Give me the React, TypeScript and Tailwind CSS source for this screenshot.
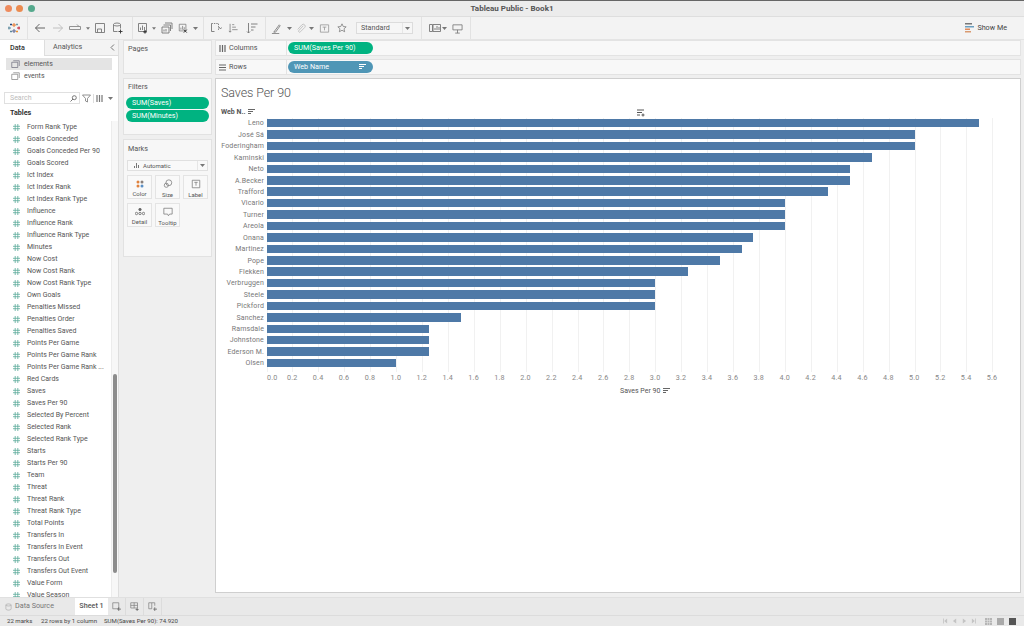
import React from "react";

const fields = ["Form Rank Type","Goals Conceded","Goals Conceded Per 90","Goals Scored","Ict Index","Ict Index Rank","Ict Index Rank Type","Influence","Influence Rank","Influence Rank Type","Minutes","Now Cost","Now Cost Rank","Now Cost Rank Type","Own Goals","Penalties Missed","Penalties Order","Penalties Saved","Points Per Game","Points Per Game Rank","Points Per Game Rank ...","Red Cards","Saves","Saves Per 90","Selected By Percent","Selected Rank","Selected Rank Type","Starts","Starts Per 90","Team","Threat","Threat Rank","Threat Rank Type","Total Points","Transfers In","Transfers In Event","Transfers Out","Transfers Out Event","Value Form","Value Season"];
const bars: [string, number][] = [["Leno",5.5],["José Sá",5],["Foderingham",5],["Kaminski",4.67],["Neto",4.5],["A.Becker",4.5],["Trafford",4.33],["Vicario",4],["Turner",4],["Areola",4],["Onana",3.75],["Martinez",3.67],["Pope",3.5],["Flekken",3.25],["Verbruggen",3],["Steele",3],["Pickford",3],["Sanchez",1.5],["Ramsdale",1.25],["Johnstone",1.25],["Ederson M.",1.25],["Olsen",1]];
const ticks = Array.from({ length: 29 }, (_, i) => i * 0.2);
const UNIT = 129.6;

const S = ({ children, w = 12, h = 12, c = "#777" }: { children: React.ReactNode; w?: number; h?: number; c?: string }) => (
  <svg width={w} height={h} viewBox="0 0 12 12" fill="none" stroke={c} strokeWidth="0.9">{children}</svg>
);
const Caret = () => <svg width="5" height="3" viewBox="0 0 5 3"><path d="M0 0h5L2.500 3z" fill="#777" /></svg>;
const Hash = () => (
  <svg width="7" height="7" viewBox="0 0 7 7" stroke="#5aa999" strokeWidth="0.8"><path d="M2.200 0v7M4.800 0v7M0 2.300h7M0 4.700h7" /></svg>
);
const SortBars = ({ c = "#666" }: { c?: string }) => (
  <svg width="7" height="6" viewBox="0 0 7 6" stroke={c} strokeWidth="1"><path d="M0 .5h7M0 2.500h5M0 4.500h3" /></svg>
);
const Logo = () => (
  <svg width="12" height="12" viewBox="0 0 12 12" strokeWidth="1">
    <path d="M6 1v4M4 3h4" stroke="#e8762d" /><path d="M6 7v4M4 9h4" stroke="#5b6591" />
    <path d="M1 4.500v3M0 6h3" stroke="#59879b" /><path d="M11 4.500v3M9 6h3" stroke="#c72037" />
    <path d="M3 1.500v2M2 2.500h2" stroke="#1f447e" /><path d="M9 8.500v2M8 9.500h2" stroke="#eb912b" />
    <path d="M9 1.500v2M8 2.500h2" stroke="#7099a6" /><path d="M3 8.500v2M2 9.500h2" stroke="#5b879b" />
  </svg>
);
const Sheet = ({ mark }: { mark?: string }) => (
  <S><path d="M1.500 1.500h8v8h-8z" /><path d="M3.500 8V5.500M5.500 8V3.500M7.500 8V5" />{mark && <path d={mark} stroke="#333" strokeWidth="1.200" />}</S>
);
const Sep = () => <div className="w-px h-[22px] bg-[#e2e2e2] shrink-0" />;
const I = ({ w, children }: { w: number; children?: React.ReactNode }) => (
  <div className="flex items-center justify-center shrink-0" style={{ width: w }}>{children}</div>
);
const Card = ({ title, className, titleClass = "pt-[3px]", children }: { title: string; className: string; titleClass?: string; children?: React.ReactNode }) => (
  <div className={"bg-[#f7f7f7] border border-[#e2e2e2] " + className}>
    <div className={"text-[7.2px] leading-[9px] text-[#555] pl-[4px] " + titleClass}>{title}</div>
    {children}
  </div>
);
const Shelf = ({ icon, label, pill, color, sort, mb }: { icon: React.ReactNode; label: string; pill: string; color: string; sort?: boolean; mb: string }) => (
  <div className={"flex h-[16px] items-center bg-[#f8f8f8] border border-[#e3e3e3] " + mb}>
    <div className="w-[71px] h-full flex items-center gap-[3px] pl-[3px] text-[7.2px] text-[#555] border-r border-[#e3e3e3]">{icon}{label}</div>
    <div className={"ml-[1px] w-[85px] h-[12px] rounded-full flex items-center justify-between pl-[6px] pr-[7px] text-[7.2px] text-white " + color}>
      {pill}{sort && <SortBars c="#fff" />}
    </div>
  </div>
);
const Mark = ({ label, icon }: { label: string; icon: React.ReactNode }) => (
  <div className="w-[25px] h-[24px] pt-[2px] bg-[#f9f9f9] border border-[#e4e4e4] flex flex-col items-center justify-center gap-[2px] text-[6px] leading-[7px] text-[#555]">
    {icon}{label}
  </div>
);

export default function App() {
  return (
    <div className="w-[1024px] h-[626px] overflow-hidden flex flex-col bg-[#efefef] text-[#555]" style={{ fontFamily: '"Roboto", "Liberation Sans", sans-serif' }}>
      {/* Title bar */}
      <div className="h-[17px] shrink-0 relative flex items-center justify-center bg-[#ececec] border-t border-t-[#666] border-b border-b-[#dedede] text-[8px] font-bold text-[#555]">
        <div className="absolute left-[4.5px] top-[3.5px] flex gap-[4.5px]">
          <span className="w-[7px] h-[7px] rounded-full bg-[#ee8b5e]" />
          <span className="w-[7px] h-[7px] rounded-full bg-[#eb8b50]" />
          <span className="w-[7px] h-[7px] rounded-full bg-[#55a98d]" />
        </div>
        Tableau Public - Book1
      </div>

      {/* Toolbar */}
      <div className="h-[23px] shrink-0 flex items-center bg-[#f3f3f3] border-b border-[#e4e4e4]">
        <I w={27}><Logo /></I><Sep />
        <I w={24}><S w={12} h={12} c="#555"><path d="M11 6H1.500M5.500 2 1.500 6l4 4" /></S></I>
        <I w={12}><S c="#bbb"><path d="M1 6h9.500M6.500 2l4 4-4 4" /></S></I>
        <I w={22}><S c="#888"><path d="M.5 4.500h11v3H.5z" /><path d="M8 2.500l2 2" /></S></I>
        <I w={4}><Caret /></I>
        <I w={20}><S><path d="M1.500 1.500h9v9h-9z" /><path d="M3.500 10.500V7h4v3.500" /></S></I>
        <I w={16}><S><ellipse cx="5" cy="2.500" rx="3.500" ry="1.500" /><path d="M1.500 2.500v7h4M8.500 2.500v4" /><path d="M8.500 7.500v4M6.500 9.500h4" stroke="#333" /></S></I>
        <I w={6} /><Sep />
        <I w={19}><Sheet mark="M8 8v3.500M6.300 9.800h3.400" /></I>
        <I w={4}><Caret /></I>
        <I w={22}><S><path d="M4 1h7v6M2.500 3h7v6M1 5h7v6H1z" /><path d="M3 9.500v-2M5 9.500V7" /></S></I>
        <I w={10}><Sheet mark="M7 8l3.500 3.500M10.500 8 7 11.500" /></I>
        <I w={14}><Caret /></I>
        <I w={1} /><Sep />
        <I w={24}><S><path d="M1.500 1.500h7v7" strokeDasharray="1.400 1" /><path d="M1.500 1.500v8h3M9 5l1.500 2 1-1.500" /></S></I>
        <I w={10}><S><path d="M2.500 1v10M1 9.500 2.500 11 4 9.500M5 2h2.500M5 5h4.500M5 8h6.500" /></S></I>
        <I w={27}><S><path d="M2.500 1v10M1 9.500 2.500 11 4 9.500M5 2h6.500M5 5h4.500M5 8h2.500" /></S></I>
        <Sep />
        <I w={20}><S w={11} h={11}><path d="M3 10 9 2l1 1-5 7zM1 11.500h8" /></S></I>
        <I w={6}><Caret /></I>
        <I w={16}><S w={11} h={11} c="#bbb"><path d="M9 3 4 8.500a1 1 0 0 0 2 1L10.500 5a2 2 0 0 0-3-3L3 7" /></S></I>
        <I w={6}><Caret /></I>
        <I w={20}><S w={11} h={11} c="#999"><path d="M1.500 2h9v8h-9z" /><path d="M4 4.500h4M6 4.500v3.500" /></S></I>
        <I w={16}><S w={10} h={10}><path d="M6 1l1.500 3.200 3.500.4-2.600 2.300.8 3.600L6 8.700l-3.200 1.800.8-3.600L1 4.600l3.500-.4z" /></S></I>
        <I w={6} />
        <div className="w-[57px] h-[12px] shrink-0 bg-[#f6f6f6] border border-[#dcdcdc] flex items-center text-[7.2px] text-[#555]">
          <span className="flex-1 pl-[4px]">Standard</span>
          <span className="w-[10px] h-full flex items-center justify-center border-l border-[#e6e6e6]"><Caret /></span>
        </div>
        <I w={8} /><Sep />
        <I w={6} />
        <I w={13}><S w={12} c="#777"><path d="M.5 2.500h3v7h-3zM4 2.500h7.500v7H4z" /><path d="M6 8V6M8 8V4M10 8V5" /></S></I>
        <I w={6}><Caret /></I>
        <I w={20}><S w={11} h={11}><path d="M1 2h10v5.500H1zM6 7.500V11M3.500 11h5" /></S></I>
        <I w={3} /><Sep />
        <div className="flex-1" />
        <div className="flex items-center gap-[3px] text-[7.2px] text-[#444] pr-[17px]">
          <svg width="9" height="10" viewBox="0 0 9 10"><path d="M0 0h7v1.500H0z" fill="#777" /><path d="M0 3h9v1.500H0z" fill="#6a9fc0" /><path d="M0 5.500h5V7H0z" fill="#e08a5a" /><path d="M0 8h6v1.500H0z" fill="#d99a70" /></svg>
          Show Me
        </div>
      </div>

      {/* Main */}
      <div className="flex-1 min-h-0 flex">
        {/* Data pane */}
        <div className="w-[119px] shrink-0 bg-white border-r border-[#dedede] flex flex-col overflow-hidden text-[7px]">
          <div className="h-[16px] shrink-0 flex items-stretch text-[7.2px]">
            <div className="w-[44px] flex items-center pl-[10px] font-medium text-[#333]">Data</div>
            <div className="flex-1 flex items-center justify-between pl-[8px] pr-[3px] bg-[#f3f3f3] border-l border-b border-[#dedede] text-[#555]">
              Analytics
              <svg width="5" height="7" viewBox="0 0 5 7" fill="none" stroke="#777"><path d="M4 .5 1 3.500l3 3" /></svg>
            </div>
          </div>
          <div className="pt-[2px] px-[6px] text-[#555]">
            <div className="h-[12px] flex items-center gap-[4px] pl-[5px] bg-[#e4e4e4]"><S w={9} h={9} c="#667"><path d="M1 3h8v7H1z" /><path d="M3 1h8v7" /></S>elements</div>
            <div className="h-[12px] flex items-center gap-[4px] pl-[5px]"><S w={9} h={9}><path d="M1 3h8v7H1z" /><path d="M3 1h8v7" /></S>events</div>
          </div>
          <div className="h-[12px] mt-[10px] flex items-center shrink-0 pl-[4px]">
            <div className="w-[76px] h-[12px] border border-[#e0e0e0] flex items-center justify-between pl-[5px] pr-[2px] text-[#bbb]">
              Search
              <svg width="7" height="7" viewBox="0 0 7 7" fill="none" stroke="#777"><circle cx="4.300" cy="2.700" r="2" /><path d="M3 4 .5 6.500" /></svg>
            </div>
            <div className="ml-[2px]"><svg width="9" height="9" viewBox="0 0 9 9" fill="none" stroke="#777" strokeWidth=".8"><path d="M.5 1h8L5.500 4.500V8l-2-1V4.500z" /></svg></div>
            <div className="w-px h-[9px] bg-[#ddd] mx-[2px]" />
            <svg width="7" height="7" viewBox="0 0 7 7" stroke="#777"><path d="M1 0v7M3.500 0v7M6 0v7" strokeWidth="1.200" /></svg>
            <div className="ml-[5px]"><Caret /></div>
          </div>
          <div className="mt-[4px] pl-[10px] h-[10px] leading-[10px] text-[7.2px] font-bold text-[#333] shrink-0">Tables</div>
          <div className="relative flex-1 min-h-0 mt-[3px] overflow-hidden">
            <div className="absolute top-0 bottom-0 right-0 w-[7px] bg-[#f7f7f7] border-l border-[#ececec]">
              <div className="absolute left-[1px] w-[4px] top-[253px] h-[199px] rounded-full bg-[#8c8c8c]" />
            </div>
            {fields.map((f) => (
              <div key={f} className="h-[12px] flex items-center gap-[7px] pl-[13px] whitespace-nowrap text-[#555]"><Hash />{f}</div>
            ))}
          </div>
        </div>

        {/* Cards column */}
        <div className="w-[96px] shrink-0 pl-[4px] pr-[3px] flex flex-col gap-[4px]">
          <Card title="Pages" className="h-[34px]" />
          <Card title="Filters" className="h-[57px]">
            <div className="mt-[6px] px-[2px] flex flex-col gap-[1px]">
              <div className="h-[12px] rounded-full bg-[#00b381] text-white text-[7.2px] flex items-center pl-[6px]">SUM(Saves)</div>
              <div className="h-[12px] rounded-full bg-[#00b381] text-white text-[7.2px] flex items-center pl-[6px]">SUM(Minutes)</div>
            </div>
          </Card>
          <Card title="Marks" className="h-[118px]" titleClass="pt-[4px]">
            <div className="mt-[7px] mx-[3px] h-[11px] border border-[#e0e0e0] bg-[#f9f9f9] flex items-center text-[6px] text-[#555]">
              <span className="flex-1 flex items-center gap-[4px] pl-[6px]">
                <svg width="5" height="5" viewBox="0 0 5 5" stroke="#777"><path d="M.5 5V3M2.500 5V0M4.500 5V2" /></svg>Automatic
              </span>
              <span className="w-[10px] h-full flex items-center justify-center border-l border-[#e6e6e6]"><Caret /></span>
            </div>
            <div className="mt-[4px] mx-[3px] grid grid-cols-3 gap-x-[3px] gap-y-[4px] w-[81px]">
              <Mark label="Color" icon={<svg width="8" height="8" viewBox="0 0 8 8"><circle cx="2" cy="2" r="1.500" fill="#e0823d" /><circle cx="6" cy="2" r="1.500" fill="#8a7f7a" /><circle cx="2" cy="6" r="1.500" fill="#e0823d" /><circle cx="6" cy="6" r="1.500" fill="#5b8fc4" /></svg>} />
              <Mark label="Size" icon={<S w={10} h={10}><circle cx="7" cy="4.500" r="3.500" /><circle cx="4" cy="7.500" r="2.500" /></S>} />
              <Mark label="Label" icon={<S w={10} h={10}><path d="M1.500 1.500h9v9h-9z" /><path d="M4 4h4M6 4v4" /></S>} />
              <Mark label="Detail" icon={<svg width="10" height="8" viewBox="0 0 10 8" fill="none" stroke="#666" strokeWidth=".8"><circle cx="5" cy="1.500" r="1.200" fill="#666" /><circle cx="1.500" cy="5.500" r="1.200" /><circle cx="5" cy="5.500" r="1.200" /><circle cx="8.500" cy="5.500" r="1.200" /></svg>} />
              <Mark label="Tooltip" icon={<S w={10} h={10}><path d="M1 1.500h10v7H8l-1.500 2-1-2H1z" /></S>} />
            </div>
          </Card>
        </div>

        {/* Right area */}
        <div className="flex-1 min-w-0 pr-[3px] pb-[4px] flex flex-col">
          <Shelf mb="mb-[3px]" label="Columns" pill="SUM(Saves Per 90)" color="bg-[#00b381]" icon={<svg width="7" height="7" viewBox="0 0 7 7" stroke="#666" strokeWidth="1.200"><path d="M1 0v7M3.500 0v7M6 0v7" /></svg>} />
          <Shelf mb="mb-[3px]" label="Rows" pill="Web Name" color="bg-[#4f96b6]" sort icon={<svg width="7" height="7" viewBox="0 0 7 7" stroke="#666" strokeWidth="1.200"><path d="M0 1h7M0 3.500h7M0 6h7" /></svg>} />
          <div className="flex-1 min-h-0 bg-white border border-[#cfcfcf] flex flex-col">
            <div className="h-[28px] pl-[5px] flex items-center text-[12.5px] tracking-[-0.1px] text-[#555] font-light shrink-0">Saves Per 90</div>
            <div className="h-[10.5px] flex items-center shrink-0 relative">
              <div className="pl-[5px] flex items-center gap-[3px] text-[7px] font-bold text-[#555]">Web N..<SortBars /></div>
              <div className="absolute left-[421px] top-[2px] flex flex-col"><svg width="9" height="8" viewBox="0 0 9 8" stroke="#555"><path d="M0 1h7M0 3.500h5M0 6h3M6 4.500v3M4.500 6h3" /></svg></div>
            </div>
            <div className="relative shrink-0 h-[259.5px]">
              {ticks.map((t) => (
                <div key={t} className="absolute top-0 h-[254px] w-px bg-[#f1f1f1]" style={{ left: 50.5 + t * UNIT }} />
              ))}
              <div className="relative flex flex-col">
                {bars.map(([n, v]) => (
                  <div key={n} className="h-[11.43px] flex items-center">
                    <div className="w-[48px] pt-[1px] text-right text-[7px] tracking-[0.15px] text-[#777] whitespace-nowrap">{n}</div>
                    <div className="ml-[2.5px] h-[8.5px] bg-[#4e79a7]" style={{ width: v * UNIT }} />
                  </div>
                ))}
              </div>
              {ticks.map((t, i) => (
                <span key={t} className="absolute top-[255.5px] text-[7.2px] leading-[9px] text-[#888] tracking-[0.2px]" style={{ left: (i === 0 ? 51 : 50.5 + t * UNIT - 5.5) }}>{t.toFixed(1)}</span>
              ))}
            </div>
            <div className="mt-[9px] ml-[404px] flex items-center gap-[3px] text-[7px] text-[#555]">Saves Per 90 <SortBars /></div>
          </div>
        </div>
      </div>

      {/* Tabs */}
      <div className="h-[18px] shrink-0 flex items-stretch bg-[#e9e9e9] border-t border-[#e0e0e0] text-[7.2px]">
        <div className="w-[75px] flex items-center gap-[3px] pl-[5px] text-[#777]">
          <S w={7} h={8} c="#999"><ellipse cx="6" cy="2.500" rx="4.500" ry="1.800" /><path d="M1.500 2.500v7c0 2.500 9 2.500 9 0v-7" /></S>
          Data Source
        </div>
        <div className="w-[33px] bg-white flex items-center justify-center text-[#555] font-medium">Sheet 1</div>
        <div className="w-[18px] flex items-center justify-center border-r border-[#dcdcdc]"><S w={9} h={9}><path d="M1 1h8v8H1z" /><path d="M9 7v5M7 9.500h5" stroke="#555" /></S></div>
        <div className="w-[18px] flex items-center justify-center border-r border-[#dcdcdc]"><S w={9} h={9}><path d="M1 1h9v7H1zM5.500 1v7M1 4.500h9" /><path d="M9.500 8v4M7.500 10h4" stroke="#555" /></S></div>
        <div className="w-[18px] flex items-center justify-center border-r border-[#dcdcdc]"><S w={9} h={9}><path d="M1 1h4v8H1zM5 1h4v4" /><path d="M9 7v5M7 9.500h5" stroke="#555" /></S></div>
      </div>

      {/* Status */}
      <div className="h-[11px] shrink-0 flex items-center bg-[#e9e9e9] border-t border-[#dcdcdc] text-[6.1px] text-[#444] whitespace-nowrap">
        <span className="ml-[7px] w-[34px]">22 marks</span>
        <span className="w-[63px]">22 rows by 1 column</span>
        <span>SUM(Saves Per 90): 74.920</span>
        <div className="flex-1" />
        <div className="flex items-center gap-[5px] pr-[8px]">
          <svg className="mr-[4px]" width="33" height="6" viewBox="0 0 40 6" fill="#c4c4c4"><path d="M0 0h1v6H0zM5 0v6L1.500 3zM16 0v6l-4-3zM24 0v6l4-3zM35 0v6l3.500-3zM39 0h1v6h-1z" /></svg>
          <svg width="7" height="7" viewBox="0 0 7 7" fill="#b5b5b5"><path d="M0 0h2v2H0zM2.500 0h2v2h-2zM5 0h2v2H5zM0 2.500h2v2H0zM2.500 2.500h2v2h-2zM5 2.500h2v2H5zM0 5h2v2H0zM2.500 5h2v2h-2zM5 5h2v2H5z" /></svg>
          <span className="w-[7px] h-[7px] bg-[#a9a9a9]" />
          <span className="w-[7px] h-[7px] bg-[#555]" />
        </div>
      </div>
    </div>
  );
}
